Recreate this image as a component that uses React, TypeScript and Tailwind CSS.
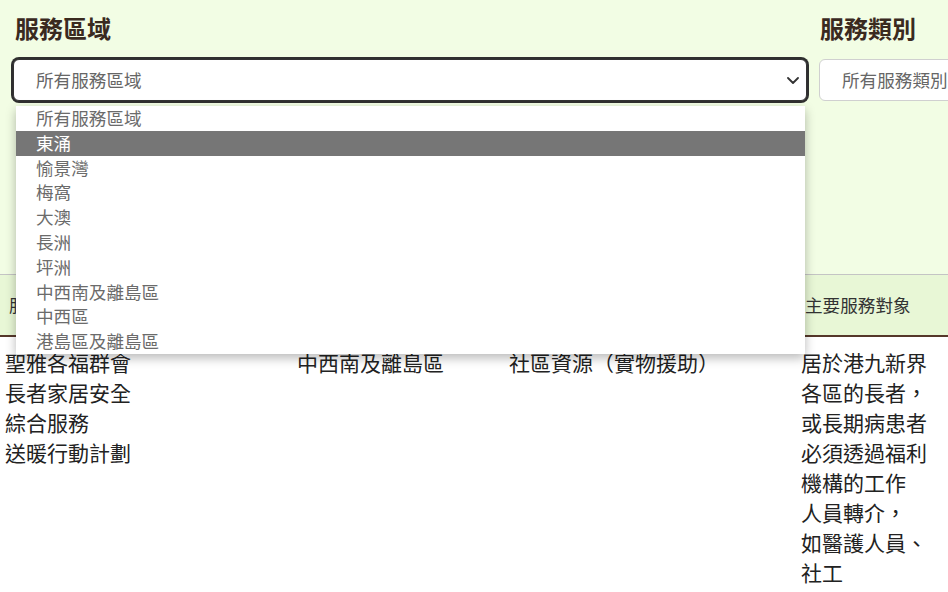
const areas = [
  "所有服務區域",
  "東涌",
  "愉景灣",
  "梅窩",
  "大澳",
  "長洲",
  "坪洲",
  "中西南及離島區",
  "中西區",
  "港島區及離島區",
];

const headers = ["服務名稱", "服務區域", "服務類別", "主要服務對象"];

const row = {
  name: ["聖雅各福群會", "長者家居安全", "綜合服務", "送暖行動計劃"],
  area: ["中西南及離島區"],
  type: ["社區資源（實物援助）"],
  target: ["居於港九新界", "各區的長者，", "或長期病患者", "必須透過福利", "機構的工作", "人員轉介，", "如醫護人員、", "社工"],
};

function Chevron() {
  return (
    <svg width="12" height="7" viewBox="0 0 12 7" fill="none">
      <path d="M1 1l5 5 5-5" stroke="#333" strokeWidth="1.8" strokeLinecap="round" strokeLinejoin="round" />
    </svg>
  );
}

function Lines({ lines }: { lines: string[] }) {
  return (
    <>
      {lines.map((l) => (
        <div key={l} className="whitespace-nowrap">{l}</div>
      ))}
    </>
  );
}

export default function App() {
  return (
    <div className="w-[948px] h-[592px] overflow-hidden bg-white font-['Noto_Sans_CJK_TC','Noto_Sans',sans-serif]">
      {/* Filters */}
      <div className="h-[275px] bg-[#f2fde4] border-b border-[#c4c4c4] flex gap-[12px] pl-[13px] pt-[12px]">
        <div className="w-[794px] shrink-0">
          <h2 className="text-[24px] leading-[32px] font-bold text-[#3a2a1f] pl-[2px] mb-[15px]">服務區域</h2>
          <div className="relative">
            <div className="h-[42px] rounded-md bg-white border border-[#333] ring-2 ring-[#2f2f2f] flex items-center justify-between pl-[22px] pr-[7px]">
              <span className="text-[17.6px] text-[#666]">所有服務區域</span>
              <Chevron />
            </div>
            {/* open menu */}
            <div className="absolute top-[47px] left-[3px] right-[2px] z-10 bg-white shadow-[0_4px_10px_rgba(0,0,0,0.28)]">
              {areas.map((a, i) => (
                <div
                  key={a}
                  className={`h-[24.8px] leading-[24.8px] pl-[20px] text-[17.6px] ${i === 1 ? "bg-[#767676] text-white" : "text-[#6b6b6b]"}`}
                >
                  {a}
                </div>
              ))}
            </div>
          </div>
        </div>
        <div className="w-[200px] shrink-0">
          <h2 className="text-[24px] leading-[32px] font-bold text-[#3a2a1f] pl-[1px] mb-[15px]">服務類別</h2>
          <div className="h-[42px] rounded-md bg-white border border-[#d0d0d0] flex items-center pl-[22px]">
            <span className="text-[17.6px] text-[#666] whitespace-nowrap">所有服務類別</span>
          </div>
        </div>
      </div>

      {/* Table */}
      <div className="grid grid-cols-[292px_212px_292px_1fr] h-[62px] bg-[#e8f7d6] border-b-2 border-[#55382a] items-center text-[17.6px] text-[#333]">
        {headers.map((h) => (
          <div key={h} className="pl-[9px] whitespace-nowrap">{h}</div>
        ))}
      </div>
      <div className="grid grid-cols-[292px_212px_292px_1fr] pt-[10px] text-[21px] leading-[30px] text-[#222]">
        <div className="pl-[5px]"><Lines lines={row.name} /></div>
        <div className="pl-[5px]"><Lines lines={row.area} /></div>
        <div className="pl-[5px]"><Lines lines={row.type} /></div>
        <div className="pl-[5px]"><Lines lines={row.target} /></div>
      </div>
    </div>
  );
}
